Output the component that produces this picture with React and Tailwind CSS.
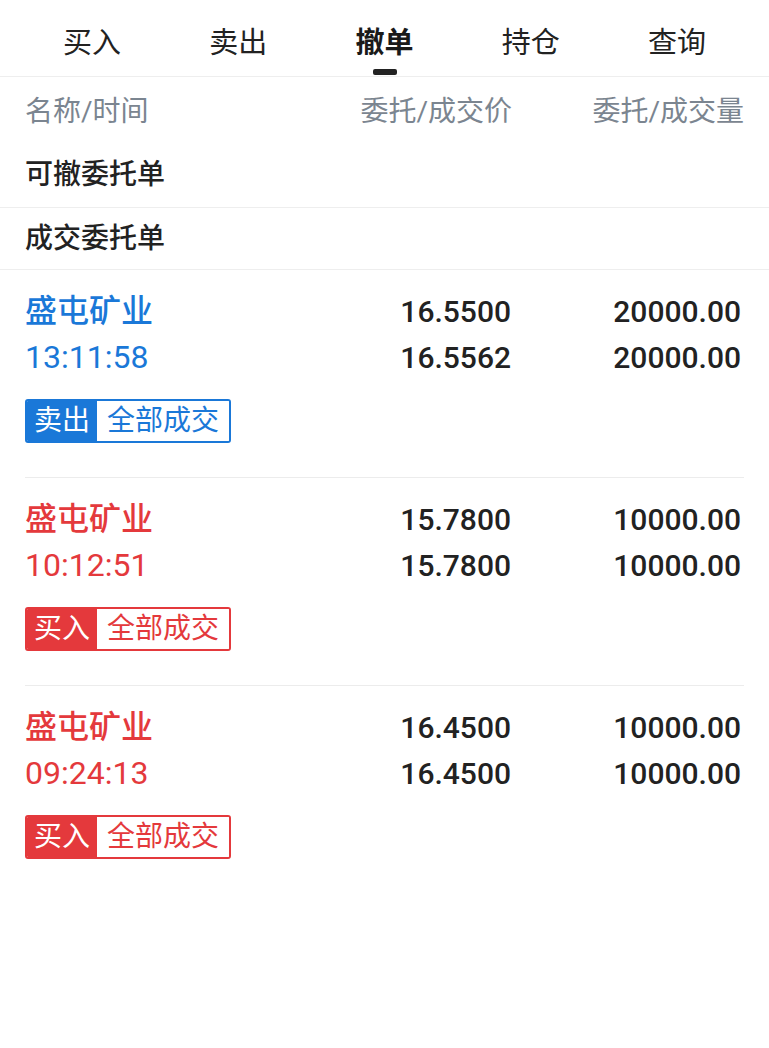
import { useState } from "react";

const tabs = ["买入", "卖出", "撤单", "持仓", "查询"];

const orders = [
    { name: "盛屯矿业", time: "13:11:58", side: "卖出", price: "16.5500", dealPrice: "16.5562", qty: "20000.00", dealQty: "20000.00", color: "blue" },
    { name: "盛屯矿业", time: "10:12:51", side: "买入", price: "15.7800", dealPrice: "15.7800", qty: "10000.00", dealQty: "10000.00", color: "red" },
    { name: "盛屯矿业", time: "09:24:13", side: "买入", price: "16.4500", dealPrice: "16.4500", qty: "10000.00", dealQty: "10000.00", color: "red" },
];

const font = { fontFamily: "Roboto, 'Noto Sans CJK SC', sans-serif" };

function OrderItem({ order, last }) {
    const isBlue = order.color === "blue";
    const text = isBlue ? "text-[#1a78d8]" : "text-[#e4393c]";
    const bg = isBlue ? "bg-[#1a78d8]" : "bg-[#e4393c]";
    const border = isBlue ? "border-[#1a78d8]" : "border-[#e4393c]";

    return (
        <div className="mx-[25px]">
            <div className={`pt-[18px] pb-[34px] ${last ? "" : "border-b border-[#ececec]"}`}>
                <div className="flex h-[46px] items-center pr-[3px]">
                    <div className={`flex-1 text-[32px] font-medium ${text}`}>{order.name}</div>
                    <div className="w-[240px] text-right text-[30px] font-medium text-[#222]">{order.price}</div>
                    <div className="w-[230px] text-right text-[30px] font-medium text-[#222]">{order.qty}</div>
                </div>
                <div className="flex h-[46px] items-center pr-[3px]">
                    <div className={`flex-1 text-[32px] ${text}`}>{order.time}</div>
                    <div className="w-[240px] text-right text-[30px] font-medium text-[#222]">{order.dealPrice}</div>
                    <div className="w-[230px] text-right text-[30px] font-medium text-[#222]">{order.dealQty}</div>
                </div>
                <div className={`mt-[19px] inline-flex h-[44px] overflow-hidden rounded-[3px] border-2 ${border}`}>
                    <span className={`flex items-center px-[7px] text-[28px] text-white ${bg}`}>{order.side}</span>
                    <span className={`flex items-center bg-white px-[10px] text-[28px] ${text}`}>全部成交</span>
                </div>
            </div>
        </div>
    );
}

export default function App() {
    const [active, setActive] = useState(2);

    return (
        <div className="min-h-[1048px] w-[769px] bg-white" style={font}>
            {/* Tabs */}
            <div className="flex h-[77px] border-b border-[#eeeeee] px-[19px]">
                {tabs.map((t, i) => (
                    <button
                        key={t}
                        onClick={() => setActive(i)}
                        className={`relative flex flex-1 items-center justify-center pt-[12px] text-[29px] ${i === active ? "font-bold text-[#1a1a1a]" : "text-[#222]"}`}
                    >
                        {t}
                        {i === active && (
                            <span className="absolute bottom-[1px] left-1/2 h-[6px] w-[24px] -translate-x-1/2 rounded-[2px] bg-[#222]" />
                        )}
                    </button>
                ))}
            </div>

            {/* Column header */}
            <div className="flex h-[65px] items-center px-[25px] pt-[4px] text-[28px] text-[#7b8590]">
                <div className="flex-1">名称/时间</div>
                <div className="w-[240px] text-right">委托/成交价</div>
                <div className="w-[232px] text-right">委托/成交量</div>
            </div>

            {/* Sections */}
            <div className="flex h-[66px] items-center border-b border-[#eeeeee] px-[25px] text-[28px] font-medium text-[#222]">
                可撤委托单
            </div>
            <div className="flex h-[62px] items-center border-b border-[#eeeeee] px-[25px] text-[28px] font-medium text-[#222]">
                成交委托单
            </div>

            {orders.map((o, i) => (
                <OrderItem key={i} order={o} last={i === orders.length - 1} />
            ))}
        </div>
    );
}
